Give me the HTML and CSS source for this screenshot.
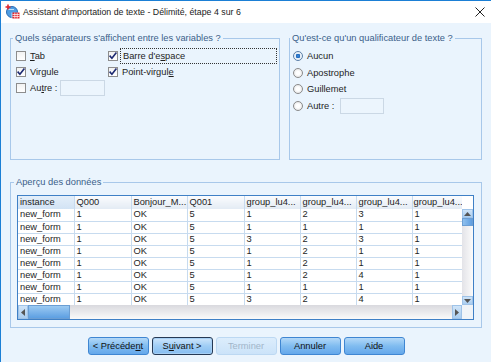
FILE: index.html
```html
<!DOCTYPE html>
<html lang="fr">
<head>
    <meta charset="UTF-8">
    <title>Assistant d'importation de texte</title>
    <link rel="stylesheet" href="styles.css">
</head>
<body>
    <div class="window">
        <div class="titlebar">
            <svg class="app-icon" width="15" height="15" viewBox="0 0 15 15">
                <circle cx="7" cy="8" r="5.5" fill="#4f9de2" stroke="#2a6cb5" stroke-width="1"/>
                <path d="M3 5.5h6M7 8.5v6" stroke="#bfe0fa" stroke-width="1"/>
                <path d="M0.5 3h5M3 0.5v5" stroke="#e0242a" stroke-width="1.6"/>
                <rect x="7.5" y="8.5" width="7" height="6" fill="#e3262c"/>
                <path d="M7.5 10.5h7M7.5 12.5h7M9.8 8.5v6M12.2 8.5v6" stroke="#fff" stroke-width="0.7"/>
            </svg>
            <span class="title">Assistant d'importation de texte - Délimité, étape 4 sur 6</span>
            <svg class="close" width="10" height="10" viewBox="0 0 10 10">
                <path d="M0.5 0.5L9.5 9.5M9.5 0.5L0.5 9.5" stroke="#222" stroke-width="1"/>
            </svg>
        </div>

        <div class="content">
            <div class="top-row">
                <fieldset class="group sep">
                    <legend>Quels séparateurs s'affichent entre les variables ?</legend>
                    <div class="checks">
                        <label class="check"><span class="box"></span><span><u>T</u>ab</span></label>
                        <label class="check"><span class="box on"><svg width="10" height="10" viewBox="0 0 10 10"><path d="M1.6 4.6L3.9 7.2L8.4 1.4" fill="none" stroke="#1d2a72" stroke-width="1.6"/></svg></span><span class="focus">Barre d'e<u>s</u>pace</span></label>
                        <label class="check"><span class="box on"><svg width="10" height="10" viewBox="0 0 10 10"><path d="M1.6 4.6L3.9 7.2L8.4 1.4" fill="none" stroke="#1d2a72" stroke-width="1.6"/></svg></span><span>Virgule</span></label>
                        <label class="check"><span class="box on"><svg width="10" height="10" viewBox="0 0 10 10"><path d="M1.6 4.6L3.9 7.2L8.4 1.4" fill="none" stroke="#1d2a72" stroke-width="1.6"/></svg></span><span>Point-virgul<u>e</u></span></label>
                        <label class="check"><span class="box"></span><span>Au<u>t</u>re :</span><span class="field"></span></label>
                    </div>
                </fieldset>

                <fieldset class="group qual">
                    <legend>Qu'est-ce qu'un qualificateur de texte ?</legend>
                    <div class="radios">
                        <label class="check"><span class="radio on"></span><span>Aucun</span></label>
                        <label class="check"><span class="radio"></span><span>Apostrophe</span></label>
                        <label class="check"><span class="radio"></span><span>Guillemet</span></label>
                        <label class="check"><span class="radio"></span><span>Autre :</span><span class="field wide"></span></label>
                    </div>
                </fieldset>
            </div>

            <fieldset class="group preview">
                <legend>Aperçu des données</legend>
                <div class="grid-box">
                    <div class="clip">
                        <table class="data head">
                            <colgroup><col class="c56"><col class="c57"><col class="c56"><col class="c57"><col class="c56"><col class="c56"><col class="c56"><col class="c50"></colgroup>
                            <tr>
                                <th class="sel">instance</th><th>Q000</th><th>Bonjour_M...</th><th>Q001</th>
                                <th>group_lu4...</th><th>group_lu4...</th><th>group_lu4...</th><th>group_lu4...</th>
                            </tr>
                        </table>
                    </div>
                    <div class="corner-top"></div>
                    <div class="clip">
                        <table class="data">
                            <colgroup><col class="c56"><col class="c57"><col class="c56"><col class="c57"><col class="c56"><col class="c56"><col class="c56"><col class="c50"></colgroup>
                            <tr><td>new_form</td><td>1</td><td>OK</td><td>5</td><td>1</td><td>2</td><td>3</td><td>1</td></tr>
                            <tr><td>new_form</td><td>1</td><td>OK</td><td>5</td><td>1</td><td>1</td><td>1</td><td>1</td></tr>
                            <tr><td>new_form</td><td>1</td><td>OK</td><td>5</td><td>3</td><td>2</td><td>3</td><td>1</td></tr>
                            <tr><td>new_form</td><td>1</td><td>OK</td><td>5</td><td>1</td><td>2</td><td>1</td><td>1</td></tr>
                            <tr><td>new_form</td><td>1</td><td>OK</td><td>5</td><td>1</td><td>2</td><td>1</td><td>1</td></tr>
                            <tr><td>new_form</td><td>1</td><td>OK</td><td>5</td><td>1</td><td>2</td><td>4</td><td>1</td></tr>
                            <tr><td>new_form</td><td>1</td><td>OK</td><td>5</td><td>1</td><td>1</td><td>1</td><td>1</td></tr>
                            <tr><td>new_form</td><td>1</td><td>OK</td><td>5</td><td>3</td><td>2</td><td>4</td><td>1</td></tr>
                        </table>
                    </div>
                    <div class="vscroll">
                        <span class="arrow up"><svg width="7" height="4" viewBox="0 0 7 4"><path d="M0 4L3.5 0L7 4Z" fill="#555"/></svg></span>
                        <span class="vthumb"></span>
                        <span class="vtrack"></span>
                        <span class="arrow down"><svg width="7" height="4" viewBox="0 0 7 4"><path d="M0 0L3.5 4L7 0Z" fill="#555"/></svg></span>
                    </div>
                    <div class="hscroll">
                        <span class="arrow left"><svg width="4" height="7" viewBox="0 0 4 7"><path d="M4 0L0 3.5L4 7Z" fill="#555"/></svg></span>
                        <span class="hthumb"></span>
                        <span class="htrack"></span>
                        <span class="arrow right"><svg width="4" height="7" viewBox="0 0 4 7"><path d="M0 0L4 3.5L0 7Z" fill="#555"/></svg></span>
                    </div>
                    <div class="corner"></div>
                </div>
            </fieldset>

            <div class="buttons">
                <button>&lt; Précéde<u>n</u>t</button>
                <button class="default">S<u>u</u>ivant &gt;</button>
                <button disabled>Terminer</button>
                <button>Annuler</button>
                <button>Aide</button>
            </div>
        </div>
    </div>
</body>
</html>
```

FILE: styles.css
```css
* {
    box-sizing: border-box;
}

body {
    margin: 0;
    font-family: "Liberation Sans", Arial, sans-serif;
    font-size: 9.3px;
    color: #1e1e1e;
}

.window {
    width: 491px;
    height: 362px;
    border-top: 1px solid #1b7fd5;
    border-left: 1px solid #1b7fd5;
    background-color: #eaf4fd;
    overflow: hidden;
}

/* Title bar */
.titlebar {
    height: 22px;
    background-color: #fff;
    display: flex;
    align-items: center;
    padding-left: 4px;
    font-size: 8.8px;
    color: #222;
}

.app-icon {
    margin-right: 3px;
    margin-top: -1px;
}

.title {
    flex: 1;
}

.close {
    margin-right: 6px;
}

.content {
    padding: 10px 9px 0 9px;
}

/* Group boxes */
.top-row {
    display: flex;
    gap: 9px;
}

fieldset.group {
    margin: 0;
    min-width: 0;
    border: 1px solid #a8c8ea;
    padding: 4px 5px 0 5px;
}

legend {
    padding: 0 2px;
    margin-left: -3px;
    line-height: 11px;
    color: #3b5f8a;
}

fieldset.sep {
    width: 270px;
    height: 127px;
}

fieldset.qual {
    width: 193px;
    height: 127px;
    padding-left: 3px;
}

.checks {
    display: grid;
    grid-template-columns: 92px 1fr;
    grid-auto-rows: 16px;
    align-items: center;
}

.radios {
    display: grid;
    grid-auto-rows: 16.6px;
    align-items: center;
}

.check {
    display: flex;
    align-items: center;
    gap: 4px;
    white-space: nowrap;
}

.box {
    width: 10px;
    height: 10px;
    border: 1px solid #8d8d8d;
    background: linear-gradient(#f2f2f2, #fff);
    position: relative;
}

.box svg {
    position: absolute;
    left: -1px;
    top: -1px;
}

.radio {
    width: 10px;
    height: 10px;
    border-radius: 50%;
    border: 1px solid #8a8a8a;
    background: radial-gradient(circle, #fff 30%, #dcdcdc 100%);
}

.radio.on {
    border-color: #5a7fa8;
    background: radial-gradient(circle, #3f8ee0 0, #1e66b8 35%, #e4eef8 45%, #f4f4f4 100%);
}

.focus {
    display: block;
    width: 157px;
    margin-left: -2px;
    padding: 2px 2px;
    border: 1px dotted #333;
}

.field {
    display: inline-block;
    width: 45px;
    height: 16px;
    margin-left: -1px;
    border: 1px solid #cbd8e5;
    background-color: #ecf5fd;
}

.field.wide {
    width: 44px;
    margin-left: 2px;
}

/* Data preview */
fieldset.preview {
    margin-top: 17px;
    height: 151px;
    padding: 7px 7px 0 6px;
}

.grid-box {
    height: 125px;
    border: 1px solid #3f80c6;
    background-color: #fff;
    display: grid;
    grid-template-columns: 444px 1fr;
    grid-template-rows: 13px 96px 1fr;
}

.clip {
    overflow: hidden;
}

table.data {
    border-collapse: collapse;
    table-layout: fixed;
    width: 444px;
}

.c56 {
    width: 56px;
}

.c57 {
    width: 57px;
}

.c50 {
    width: 50px;
}

.data th,
.data td {
    padding: 0 0 0 2px;
    text-align: left;
    font-weight: normal;
    white-space: nowrap;
    overflow: hidden;
    border-right: 1px solid #c7dbef;
}

.data th {
    height: 13px;
    line-height: 12px;
    background: linear-gradient(#fbfcfe, #e3ebf4);
    border-bottom: 1px solid #c7dbef;
}

.data th:last-child {
    overflow: visible;
    padding-left: 1px;
}

.data th.sel {
    background: linear-gradient(#e4effa, #d2e3f4);
}

.data td {
    height: 12px;
    line-height: 11px;
    border-bottom: 1px solid #c7dbef;
}

.corner-top {
    background-color: #fff;
}

.vscroll {
    display: flex;
    flex-direction: column;
    background: linear-gradient(to right, #e3e3e8, #fbfbfb);
}

.vscroll .vtrack {
    flex: 1;
}

.vthumb {
    height: 8px;
    background: linear-gradient(to right, #8fc0ee, #5f9ee0);
    border: 1px solid #6d9fd4;
}

.arrow {
    display: flex;
    align-items: center;
    justify-content: center;
    background: linear-gradient(#cfe4f8, #a9cdf0);
    border: 1px solid #9fc3e8;
}

.arrow.up,
.arrow.down {
    height: 9px;
}

.arrow.left,
.arrow.right {
    width: 10px;
}

.hscroll {
    display: flex;
    background: linear-gradient(#d9d9de, #fafafa);
}

.hscroll .htrack {
    flex: 1;
}

.hthumb {
    width: 42px;
    background: linear-gradient(#9ccaf2, #5d9fe2);
    border: 1px solid #6b9ed3;
}

.corner {
    background-color: #f0f4f8;
}

/* Buttons */
.buttons {
    display: flex;
    justify-content: center;
    gap: 3px;
    margin-top: 9px;
}

.buttons button {
    width: 61px;
    height: 18px;
    padding: 0;
    font-family: inherit;
    font-size: 9.3px;
    color: #111;
    border: 1px solid #3f86d2;
    border-radius: 3px;
    background: linear-gradient(#b3d8f8, #80bcf0 50%, #64a8eb);
}

.buttons button.default {
    border-color: #263a55;
    box-shadow: inset 0 0 0 1px #a6cff4;
    background: linear-gradient(#cfe6fb, #9fcdf5 50%, #86bdf1);
}

.buttons button:disabled {
    color: #a2b6c9;
    border-color: #bcd8f2;
    background: linear-gradient(#dcedfc, #cbe3f9);
}
```
